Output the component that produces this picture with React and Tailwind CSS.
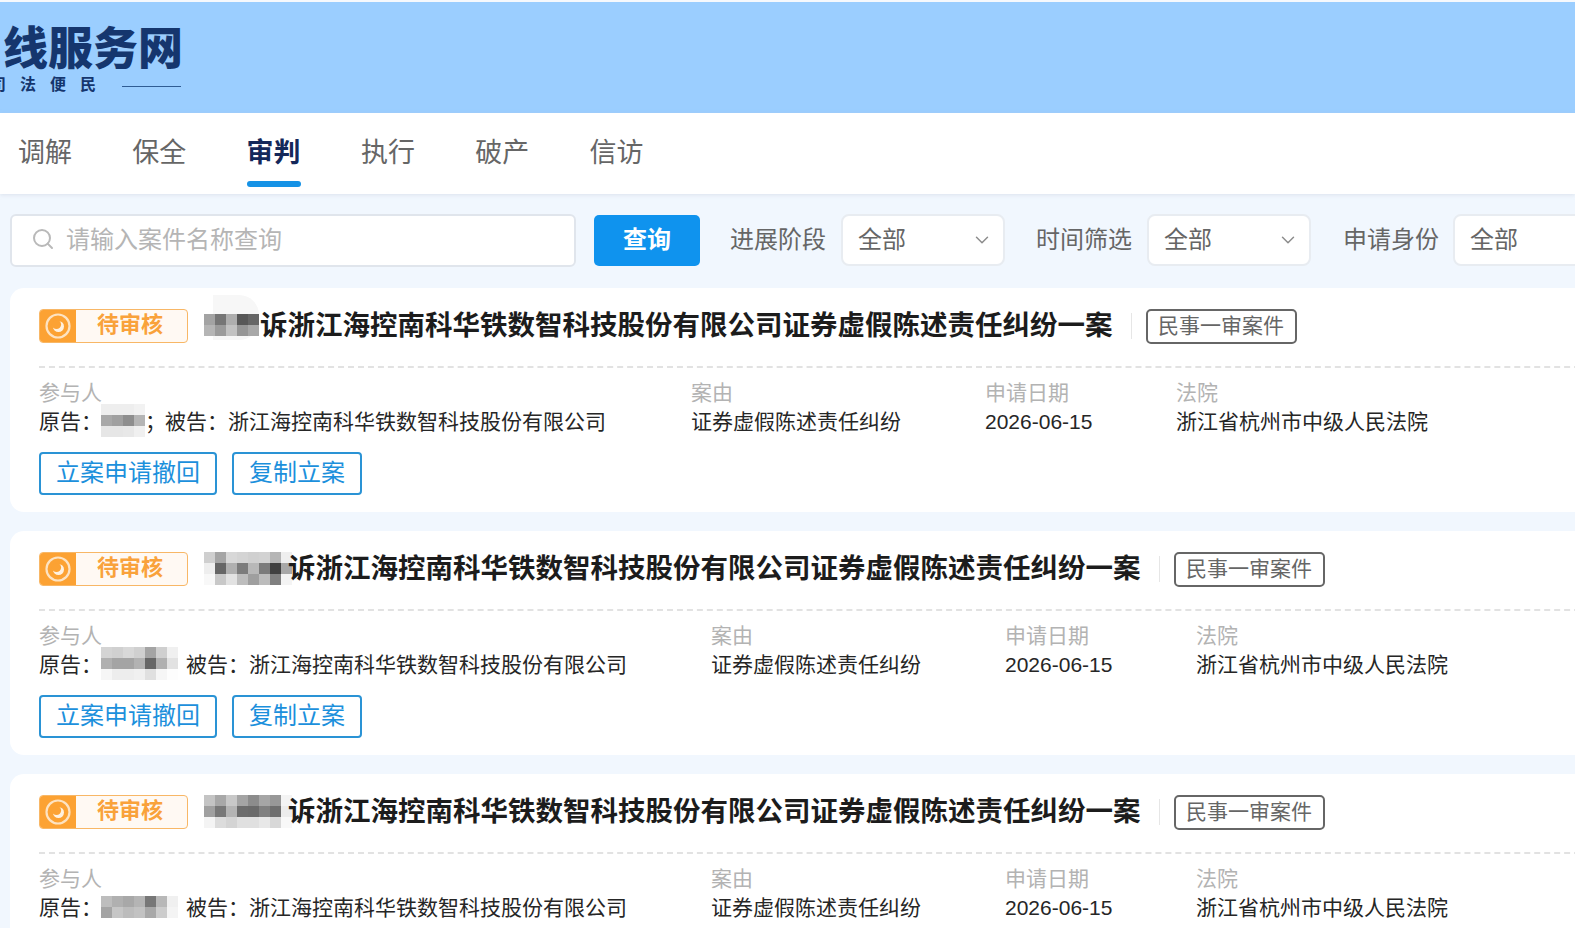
import React from 'react';
import { Search, ChevronDown } from 'lucide-react';

const CJK = { fontFamily: '"Noto Sans CJK SC", "Noto Sans", sans-serif' };
const TITLE = '诉浙江海控南科华铁数智科技股份有限公司证券虚假陈述责任纠纷一案';
const DEFENDANT = '浙江海控南科华铁数智科技股份有限公司';

const tabs = ['调解', '保全', '审判', '执行', '破产', '信访'];

const cases = [
  {
    id: 1,
    titleCells: [
      ['#a3a3a3', '#767676', '#aeaeae', '#585858', '#666666'],
      ['#b5b5b5', '#9b9b9b', '#c2c2c2', '#969696', '#a8a8a8'],
    ],
    partyCells: [
      ['#eeeeee', '#eeeeee', '#eeeeee', '#f2f2f2'],
      ['#a8a8a8', '#a0a0a0', '#8e8e8e', '#b5b5b5'],
      ['#e6e6e6', '#e6e6e6', '#e8e8e8', '#f0f0f0'],
    ],
    sep: '；',
    partyWidth: 'w-[652px]',
    titleClass: 'mr-[1px]',
    halo: true,
  },
  {
    id: 2,
    titleCells: [
      ['#cfcfcf', '#a5a5a5', '#d8d8d8', '#d4d4d4', '#d0d0d0', '#d2d2d2', '#b5b5b5', '#efefef'],
      ['#eeeeee', '#666666', '#b0b0b0', '#7c7c7c', '#b8b8b8', '#7b7b7b', '#404040', '#a8a8a8'],
      ['#f8f8f8', '#c8c8c8', '#e2e2e2', '#bdbdbd', '#9f9f9f', '#bcbcbc', '#808080', '#f4f4f4'],
    ],
    partyCells: [
      ['#d4d4d4', '#d0d0d0', '#d8d8d8', '#d0d0d0', '#a4a4a4', '#cfcfcf', '#f0f0f0'],
      ['#b0b0b0', '#a4a4a4', '#a4a4a4', '#b2b2b2', '#666666', '#b0b0b0', '#e2e2e2'],
      ['#f6f6f6', '#ededed', '#ededed', '#f0f0f0', '#e0e0e0', '#f6f6f6', '#fdfdfd'],
    ],
    sep: '',
    partyWidth: 'w-[672px]',
    titleClass: '-mr-[4px]',
  },
  {
    id: 3,
    titleCells: [
      ['#c4c4c4', '#a8a8a8', '#c8c8c8', '#a4a4a4', '#8c8c8c', '#a6a6a6', '#989898', '#f4f4f4'],
      ['#a0a0a0', '#787878', '#b4b4b4', '#6c6c6c', '#6a6a6a', '#808080', '#6e6e6e', '#ececec'],
      ['#f4f4f4', '#dcdcdc', '#d4d4d4', '#e0e0e0', '#e0e0e0', '#e8e8e8', '#d8d8d8', '#f8f8f8'],
    ],
    partyCells: [
      ['#bdbdbd', '#b0b0b0', '#a8a8a8', '#b4b4b4', '#777777', '#b8b8b8', '#f0f0f0'],
      ['#a4a4a4', '#c6c6c6', '#bcbcbc', '#c2c2c2', '#a8a8a8', '#cccccc', '#f4f4f4'],
    ],
    sep: '',
    partyWidth: 'w-[672px]',
    titleClass: '-mr-[4px]',
  },
];

function Mosaic({ cells, className = '' }) {
  return (
    <span className={`relative inline-flex flex-col shrink-0 rounded-r-[10px] ${className}`}>
      {cells.map((row, r) => (
        <span key={r} className="flex">
          {row.map((c, i) => (
            <span key={i} className="block w-[11px] h-[11px]" style={{ backgroundColor: c }} />
          ))}
        </span>
      ))}
    </span>
  );
}

function Select() {
  return (
    <div className="w-[164px] h-[52px] shrink-0 flex items-center justify-between pl-[15px] pr-[10px] pb-[4px] bg-white border-2 border-[#e8ecf1] rounded-[8px] text-[24px] text-[#666]">
      <span>全部</span>
      <ChevronDown size={22} strokeWidth={1.6} className="text-[#8c8c8c] mt-[3px]" />
    </div>
  );
}

function StatusBadge() {
  return (
    <div className="flex w-[149px] h-[34px] shrink-0 rounded-[4px] border border-[#f8b766] bg-[#fff9f3] overflow-hidden">
      <div className="w-[36px] bg-[#fca233] flex items-center justify-center">
        <svg width="28" height="28" viewBox="0 0 28 28" fill="none">
          <circle cx="14" cy="14" r="11.5" stroke="#fde3c2" strokeWidth="2.2" />
          <circle cx="14.5" cy="14.5" r="5.5" fill="#fff1df" />
          <circle cx="12.5" cy="12.5" r="4.6" fill="#fca233" />
        </svg>
      </div>
      <span className="flex-1 text-center pr-[3px] text-[22px] font-bold leading-[25px] text-[#f9a23b]">待审核</span>
    </div>
  );
}

function CaseCard({ item }) {
  return (
    <div className="bg-white rounded-[14px] w-[1600px] h-[224px] pl-[29px] pt-[20px]">
      <div className="flex items-center h-[36px]">
        <StatusBadge />
        <div className={`relative ml-[16px] -mt-[10px] ${item.titleClass}`}>
          {item.halo && (
            <span className="absolute left-[9px] -top-[11px] w-[46px] h-[45px] rounded-r-[20px] bg-[#f7f7f7]" />
          )}
          <Mosaic cells={item.titleCells} />
        </div>
        <span className="relative pb-[4px] text-[27.5px] font-bold text-[#1c1c1c] whitespace-nowrap">{TITLE}</span>
        <span className="ml-[18px] w-px h-[26px] bg-[#e6e6e6]" />
        <span className="ml-[14px] h-[35px] w-[151px] pb-[2px] flex items-center justify-center border-2 border-[#666] rounded-[5px] text-[21px] text-[#666]">
          民事一审案件
        </span>
      </div>
      <div className="mt-[22px] border-t-2 border-dashed border-[#e2e2e2]" />
      <div className="flex mt-[9px] text-[21px] leading-[29px]">
        <div className={`${item.partyWidth} whitespace-nowrap`}>
          <div className="text-[#b3b3b3]">参与人</div>
          <div className="flex items-center h-[29px] text-[#262626]">
            <span>原告：</span>
            <Mosaic cells={item.partyCells} className="-ml-[1px]" />
            <span className={item.sep ? 'w-[20px]' : 'w-[8px]'}>{item.sep}</span>
            <span>被告：</span>
            <span>{DEFENDANT}</span>
          </div>
        </div>
        <div className="w-[294px]">
          <div className="text-[#b3b3b3]">案由</div>
          <div className="text-[#262626]">证券虚假陈述责任纠纷</div>
        </div>
        <div className="w-[191px]">
          <div className="text-[#b3b3b3]">申请日期</div>
          <div className="pt-px text-[#262626]" style={{ fontFamily: '"Liberation Sans", sans-serif' }}>2026-06-15</div>
        </div>
        <div>
          <div className="text-[#b3b3b3]">法院</div>
          <div className="text-[#262626]">浙江省杭州市中级人民法院</div>
        </div>
      </div>
      <div className="flex gap-[15px] mt-[16px] text-[24px] text-[#1c90dc]">
        <button className="h-[43px] px-[15px] pb-[5px] border-2 border-[#2a93d5] rounded-[4px] bg-white leading-none">立案申请撤回</button>
        <button className="h-[43px] px-[15px] pb-[5px] border-2 border-[#2a93d5] rounded-[4px] bg-white leading-none">复制立案</button>
      </div>
    </div>
  );
}

export default function App() {
  return (
    <div className="w-[1575px] h-[928px] overflow-hidden bg-[#f1f7fe]" style={CJK}>
      <div className="h-[2px] bg-[#f6f9fd]" />
      <header className="h-[111px] bg-[#9bceff] overflow-hidden pt-[15px] pl-[3px] text-[#15366e]">
        <div className="text-[45px] font-black leading-[58px] whitespace-nowrap">线服务网</div>
        <div className="flex items-center -mt-[2px] -ml-[13px] text-[16px] font-bold leading-[20px] tracking-[14px] whitespace-nowrap">
          <span>司法便民</span>
          <span className="ml-[12px] mt-[6px] w-[59px] h-px bg-[#2f5c94]" />
        </div>
      </header>

      <nav className="h-[81px] bg-white flex gap-[60.3px] pl-[18px] text-[27px] text-[#666] shadow-[0_1px_4px_rgba(180,190,205,0.35)]">
        {tabs.map((t) => (
          <div key={t} className="relative pt-[18px] leading-[40px]">
            <span className={t === '审判' ? 'font-bold text-[#14285a]' : ''}>{t}</span>
            {t === '审判' && (
              <span className="absolute left-0 right-0 bottom-[7px] h-[6px] rounded-full bg-[#1592e6]" />
            )}
          </div>
        ))}
      </nav>

      <div className="flex items-center h-[94px] pb-[2px] pl-[10px] text-[24px] text-[#666] whitespace-nowrap">
        <div className="w-[566px] h-[53px] shrink-0 flex items-center gap-[11px] pl-[19px] pb-[4px] bg-white border-2 border-[#e0e5ec] rounded-[6px] text-[#b5b5b5]">
          <Search size={24} strokeWidth={2} className="text-[#b9b9b9] mt-[2px]" />
          <span>请输入案件名称查询</span>
        </div>
        <button className="ml-[18px] w-[106px] h-[51px] pb-[4px] shrink-0 rounded-[5px] bg-[#0f93ee] text-white font-bold">查询</button>
        <span className="ml-[30px] mr-[15px] pb-[4px]">进展阶段</span>
        <Select />
        <span className="ml-[31px] mr-[15px] pb-[4px]">时间筛选</span>
        <Select />
        <span className="ml-[32px] mr-[14px] pb-[4px]">申请身份</span>
        <Select />
      </div>

      <div className="flex flex-col gap-[19px] pl-[10px]">
        {cases.map((c) => (
          <CaseCard key={c.id} item={c} />
        ))}
      </div>
    </div>
  );
}
